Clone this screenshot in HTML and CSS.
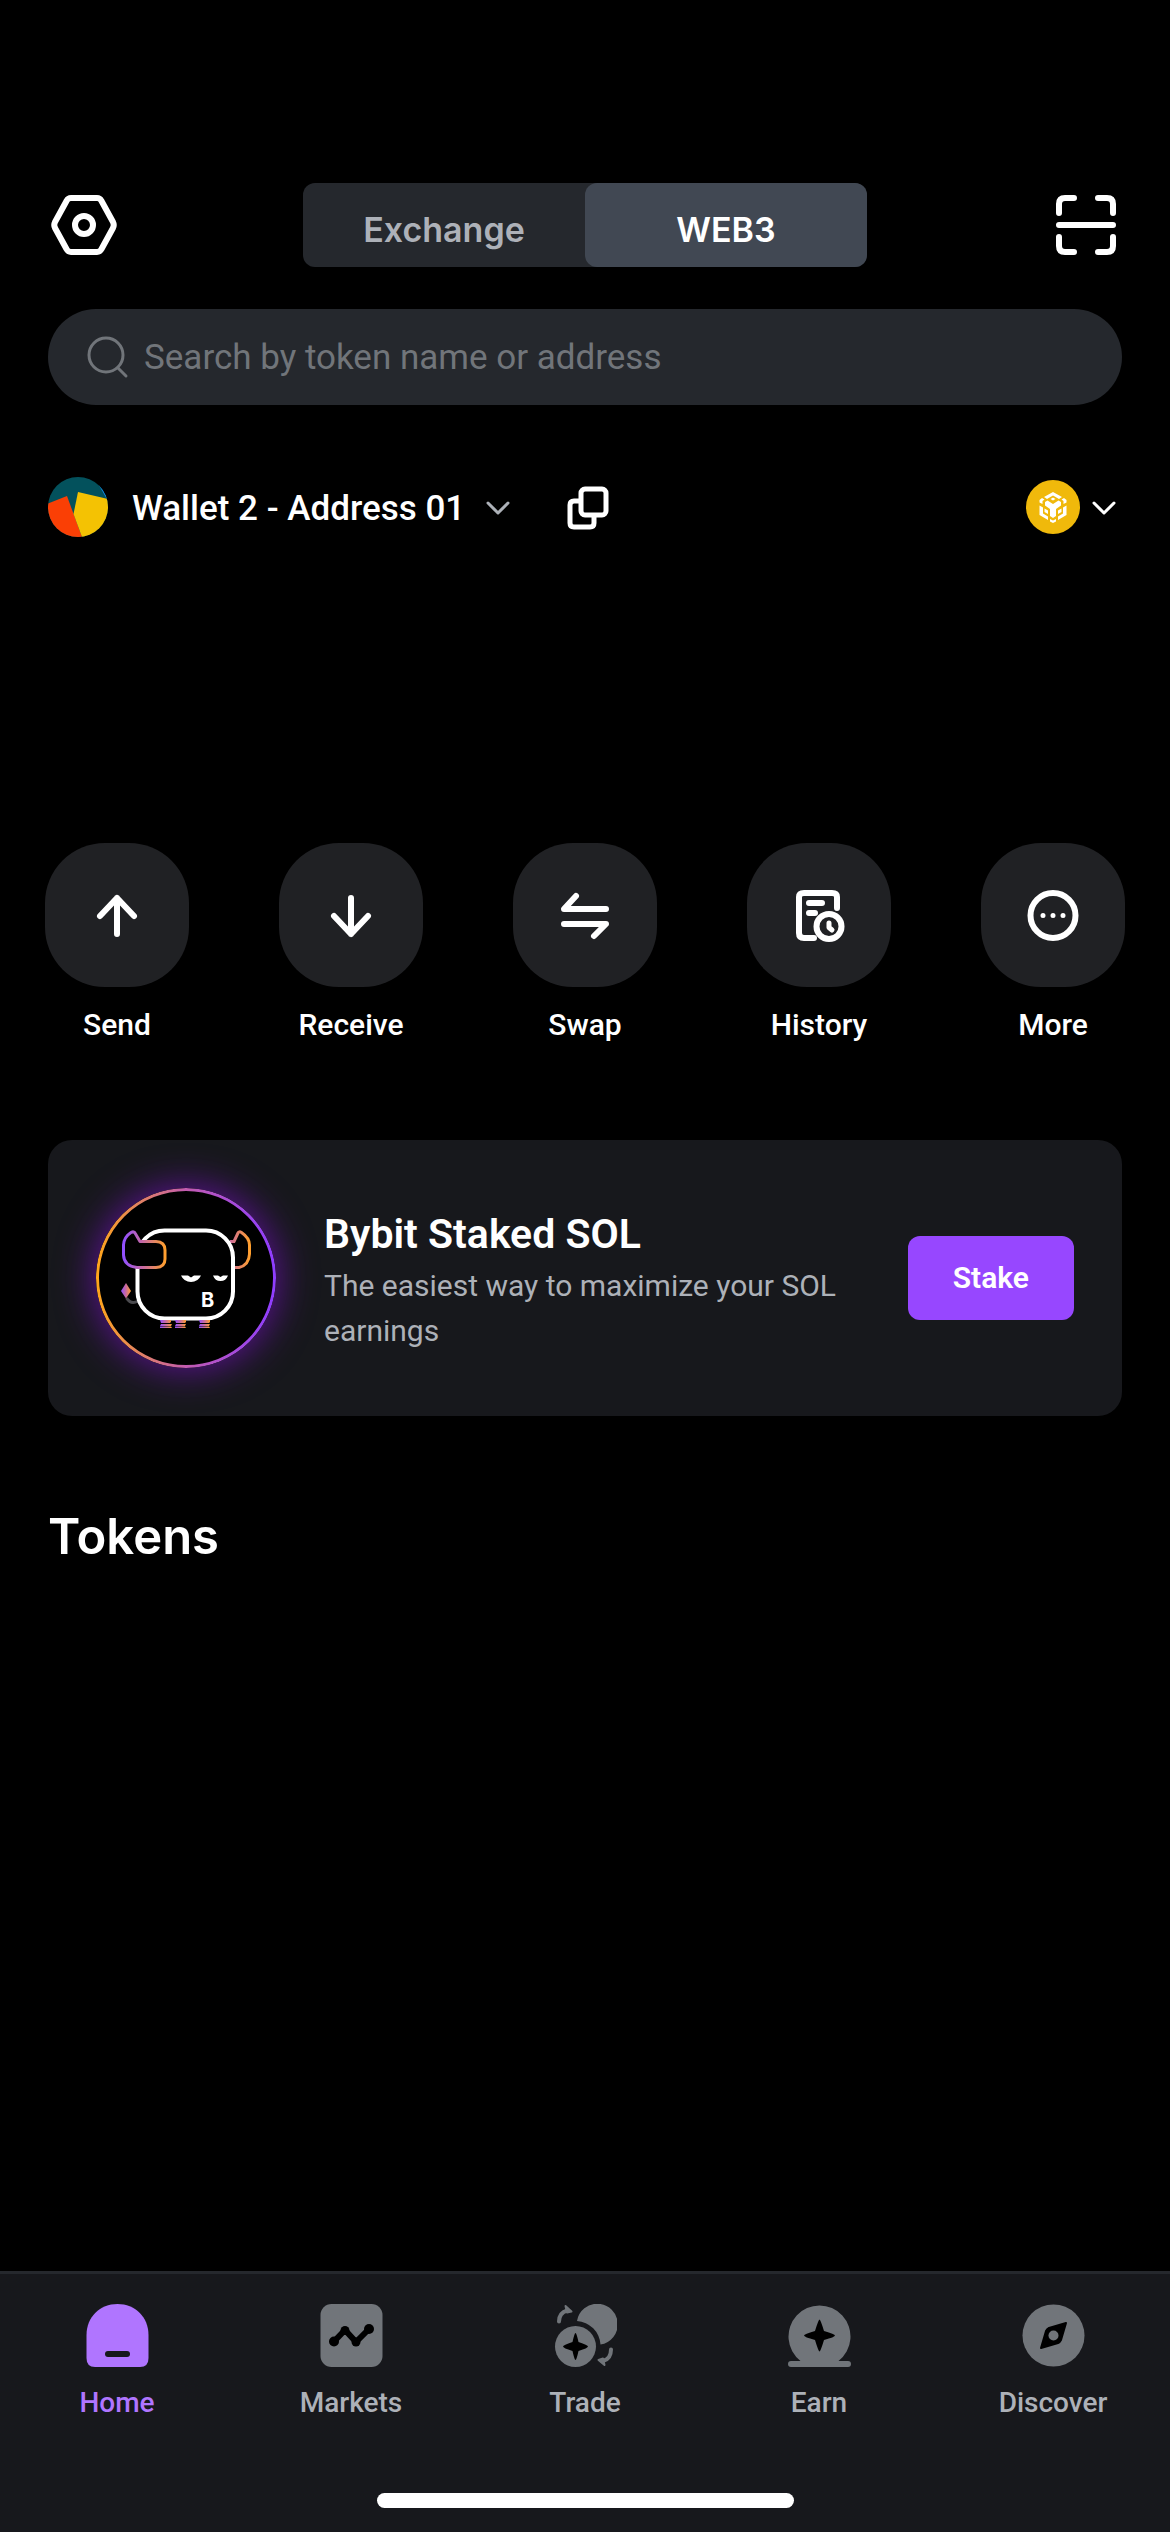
FILE: index.html
```html
<!DOCTYPE html>
<html lang="en">
<head>
<meta charset="utf-8">
<meta name="viewport" content="width=device-width, initial-scale=1">
<title>Wallet</title>
<link rel="stylesheet" href="styles.css">
</head>
<body>
<div class="page">
  <header class="topbar">
    <button class="icon-btn" aria-label="Settings">
      <svg width="72" height="72" viewBox="0 0 72 72" fill="none" stroke="#fff" stroke-width="6" stroke-linejoin="round"><path d="M23 9H49Q52 9 53.500 12L65 33Q66.500 36 65 39L53.500 60Q52 63 49 63H23Q20 63 18.500 60L7 39Q5.500 36 7 33L18.500 12Q20 9 23 9Z"/><circle cx="36" cy="36" r="9"/></svg>
    </button>
    <div class="segment">
      <button class="segment-item">Exchange</button>
      <button class="segment-item is-active">WEB3</button>
    </div>
    <button class="icon-btn" aria-label="Scan">
      <svg width="72" height="72" viewBox="0 0 72 72" fill="none" stroke="#fff" stroke-width="6" stroke-linecap="round"><path d="M9 24V15Q9 9 15 9H24M48 9H57Q63 9 63 15V24M63 48V57Q63 63 57 63H48M24 63H15Q9 63 9 57V48M9 36H63"/></svg>
    </button>
  </header>

  <label class="search">
    <svg width="48" height="48" viewBox="0 0 48 48" fill="none" stroke="#71757a" stroke-width="3" stroke-linecap="round"><circle cx="22" cy="22" r="17"/><path d="M34 35L42 43"/></svg>
    <input class="search-input" type="text" placeholder="Search by token name or address" aria-label="Search by token name or address">
  </label>

  <section class="account">
    <button class="wallet">
      <svg width="60" height="60" viewBox="0 0 60 60"><defs><clipPath id="av"><circle cx="30" cy="30" r="30"/></clipPath></defs><g clip-path="url(#av)"><path fill="#03515c" d="M0 0H60V60H0Z"/><path fill="#1190f5" d="M48 3L60 24V0Z"/><path fill="#fa3f05" d="M0 26.500L19 19L34 60H0Z"/><path fill="#f4c203" d="M30 15L60 22V60H34L25.500 37Z"/></g></svg>
      <span class="wallet-name">Wallet 2 - Address 01</span>
      <svg width="24" height="24" viewBox="0 0 24 24" fill="none" stroke="#adb1b8" stroke-width="3" stroke-linecap="round" stroke-linejoin="round"><path d="M2 8L12 18L22 8"/></svg>
    </button>
    <button class="icon-btn copy" aria-label="Copy address">
      <svg width="48" height="48" viewBox="0 0 48 48" fill="none" stroke="#fff" stroke-width="5" stroke-linejoin="round"><rect x="17" y="6" width="25" height="26" rx="4"/><path d="M17 18H10Q6 18 6 22V40Q6 44 10 44H26Q30 44 30 40V32"/></svg>
    </button>
    <button class="network" aria-label="Select network">
      <svg width="54" height="54" viewBox="0 0 54 54"><circle cx="27" cy="27" r="27" fill="#f0b90b"/><g fill="#fff"><path d="M27 12L36 17L33 19L27 15.500L21 19L18 17Z"/><path d="M27 17.500L29.500 19L27 20.500L24.500 19Z"/><path d="M19 22L21.500 20.500L27 24L32.500 20.500L35 22V25.500L30 29V36L27 38L24 36V29L19 25.500Z"/><path d="M13.500 20L16 18L18.500 19.500L16.500 21V24L13.500 22.500ZM40.500 20L38 18L35.500 19.500L37.500 21V24L40.500 22.500Z"/><path d="M13.500 25.500L17 27.500V33.500L22 36.500V40L13.500 35ZM40.500 25.500L37 27.500V33.500L32 36.500V40L40.500 35Z"/><path d="M18.500 28.500L22 30.500V34L18.500 32ZM35.500 28.500L32 30.500V34L35.500 32Z"/><path d="M24 39L27 40.500L30 39V41.500L27 43L24 41.500Z"/></g></svg>
      <svg width="24" height="24" viewBox="0 0 24 24" fill="none" stroke="#fff" stroke-width="3" stroke-linecap="round" stroke-linejoin="round"><path d="M2 8L12 18L22 8"/></svg>
    </button>
  </section>

  <section class="actions">
    <button class="action">
      <span class="tile"><svg width="72" height="72" viewBox="0 0 72 72"><path d="M36 55V19M19 37L36 19L53 37"/></svg></span>
      <span>Send</span>
    </button>
    <button class="action">
      <span class="tile"><svg width="72" height="72" viewBox="0 0 72 72"><path d="M36 19V55M19 37L36 55L53 37"/></svg></span>
      <span>Receive</span>
    </button>
    <button class="action">
      <span class="tile"><svg width="72" height="72" viewBox="0 0 72 72"><path d="M57 30H15L27 17M15 45H57L45 57"/></svg></span>
      <span>Swap</span>
    </button>
    <button class="action">
      <span class="tile"><svg width="72" height="72" viewBox="0 0 72 72"><path d="M31 59H21Q16 59 16 54V18Q16 14 21 14H49Q54 14 54 18V29M26 24H39M26 34H32"/><circle cx="46" cy="47.500" r="12.500"/><path stroke-width="5" d="M46 44V48.500L49 51"/></svg></span>
      <span>History</span>
    </button>
    <button class="action">
      <span class="tile"><svg width="72" height="72" viewBox="0 0 72 72"><circle cx="36" cy="36.500" r="22.500"/><path stroke-width="5" d="M26 36.500H26.010M36 36.500H36.010M46 36.500H46.010"/></svg></span>
      <span>More</span>
    </button>
  </section>

  <section class="promo">
    <svg class="bull" width="180" height="180" viewBox="0 0 180 180" fill="none">
      <defs>
        <linearGradient id="ring" x1="0" x2="1" y1="0" y2="0"><stop offset="0" stop-color="#ffa51c"/><stop offset=".5" stop-color="#c25bb0"/><stop offset="1" stop-color="#8f3dff"/></linearGradient>
        <linearGradient id="horn" x1="0" x2="1" y1="0" y2="0"><stop offset="0" stop-color="#9150ff"/><stop offset=".45" stop-color="#c568a5"/><stop offset="1" stop-color="#ff9f2e"/></linearGradient>
        <linearGradient id="horn2" x1="0" x2="1" y1="0" y2="0"><stop offset="0" stop-color="#cc6b9c"/><stop offset="1" stop-color="#ff9f2e"/></linearGradient>
      </defs>
      <circle cx="90" cy="90" r="88.500" fill="#000" stroke="url(#ring)" stroke-width="3"/>
      <path stroke="url(#horn2)" stroke-width="3" stroke-linejoin="round" d="M134 53.500H138L142 45Q143 43 145.500 44.500Q153.500 50 153.500 57V66Q153 77 143 79.500H134"/>
      <path stroke="#4b4b4f" stroke-width="3" d="M30.500 110Q35 117 42 113"/>
      <rect x="41.500" y="42.500" width="95.500" height="88" rx="27" fill="#000" stroke="#fff" stroke-width="4"/>
      <path fill="#000" stroke="url(#horn)" stroke-width="3" stroke-linejoin="round" d="M35 44.500Q38 43 39 45L44 53.500H60Q69 54 69 62V71Q69 79 60 79.500H41Q28 78 27.500 67V57Q28 49 35 44.500Z"/>
      <path fill="#fff" d="M85 87.500H92L95 89.500L98 87.500H105Q102 94 95 94Q88 94 85 87.500ZM117 87.500H122L124.500 89L127 87.500H132Q130 93 124.500 93Q119 93 117 87.500Z"/>
      <text class="bull-letter" x="105" y="119">B</text>
      <path fill="url(#horn)" d="M30 95L35 103L30 110.500L25 103Z"/>
      <g fill="url(#horn)"><path d="M64 132H75V134L74 135H65ZM65 136H76L75 138H64ZM64 138.500H75L76 140H64Z"/><path d="M79 132H90V134L89 135H80ZM80 136H90L89 138H79ZM79 138.500H89L90 140H79Z"/><path d="M103 132H114V134L113 135H104ZM104 136H114L113 138H103ZM103 138.500H113L114 140H103Z"/></g>
    </svg>
    <div class="promo-text">
      <h2 class="promo-title">Bybit Staked SOL</h2>
      <p class="promo-desc">The easiest way to maximize your SOL earnings</p>
    </div>
    <button class="stake">Stake</button>
  </section>

  <h1 class="heading">Tokens</h1>

  <footer class="tabbar">
    <nav class="tabs">
      <a class="tab is-current" href="#home">
        <svg width="63" height="63" viewBox="0 0 63 63"><path fill="#b075ff" d="M31.500 0C49 0 62.500 13 62.500 31V54Q62.500 63 54 63H9Q.5 63 .5 54V31C.5 13 14 0 31.500 0Z"/><rect x="19" y="47" width="25" height="6" rx="3" fill="#17181c"/></svg>
        <span>Home</span>
      </a>
      <a class="tab" href="#markets">
        <svg width="63" height="63" viewBox="0 0 63 63"><rect x=".5" width="62" height="63" rx="11" fill="#71757a"/><path fill="none" stroke="#000" stroke-width="6" stroke-linejoin="round" d="M14 37.500L25 26L36 38L49 25"/><circle cx="14" cy="37.500" r="5"/><circle cx="25" cy="26.500" r="4.500"/><circle cx="36" cy="38" r="4.500"/><circle cx="49" cy="25" r="5"/></svg>
        <span>Markets</span>
      </a>
      <a class="tab" href="#trade">
        <svg width="63" height="63" viewBox="0 0 63 63"><path fill="#71757a" d="M23 17A20.500 20.500 0 1 1 46.500 40.500A25 25 0 0 0 23 17Z"/><circle cx="21.500" cy="42.500" r="20.500" fill="#71757a"/><path d="M21.500 29Q22.500 29 24.500 38Q34 41 34 42.500Q34 44 24.500 47Q22.500 56 21.500 56Q20.500 56 18.500 47Q9 44 9 42.500Q9 41 18.500 38Q20.500 29 21.500 29Z"/><path fill="none" stroke="#71757a" stroke-width="4" stroke-linecap="round" d="M5 17.500Q5 9 13 6.500M57 45.500Q57 55 49 57"/><path fill="#71757a" stroke="#71757a" stroke-width="2" stroke-linejoin="round" d="M11.500 2L17.500 7.500L13 8.500ZM50.500 61L44.500 56L49 54.500Z"/></svg>
        <span>Trade</span>
      </a>
      <a class="tab" href="#earn">
        <svg width="63" height="63" viewBox="0 0 63 63"><path fill="#71757a" d="M12.500 57A31 31 0 1 1 50.500 57H60A3 3 0 0 1 60 63H3A3 3 0 0 1 3 57Z"/><path d="M31.500 15.500Q32.500 15.500 36 27Q47 30 47 31.500Q47 33 36 36Q32.500 47.500 31.500 47.500Q30.500 47.500 27 36Q16 33 16 31.500Q16 30 27 27Q30.500 15.500 31.500 15.500Z"/></svg>
        <span>Earn</span>
      </a>
      <a class="tab" href="#discover">
        <svg width="63" height="63" viewBox="0 0 63 63"><circle cx="31.500" cy="31.500" r="31" fill="#71757a"/><path stroke="#000" stroke-width="2" stroke-linejoin="round" d="M44 19L27 24Q25 25 24 27L19 44L36 39Q38 38 39 36Z"/><circle cx="31.500" cy="31.500" r="5" fill="#71757a"/></svg>
        <span>Discover</span>
      </a>
    </nav>
    <div class="home-indicator"></div>
  </footer>
</div>
</body>
</html>
```
FILE: styles.css
```css
* {
  box-sizing: border-box;
}

body {
  margin: 0;
  background: #000;
  color: #fff;
  font-family: "Roboto", sans-serif;
  font-size: 30px;
  line-height: 45px;
}

button {
  padding: 0;
  border: 0;
  background: none;
  color: inherit;
  font: inherit;
}

svg {
  display: block;
  flex: none;
}

h1,
h2,
p {
  margin: 0;
}

.page {
  display: flex;
  flex-direction: column;
  min-height: 100vh;
  padding-top: 183px;
}

.topbar {
  display: flex;
  align-items: center;
  justify-content: space-between;
  padding: 0 48px;
}

.segment {
  display: grid;
  grid-template-columns: 1fr 1fr;
  width: 564px;
  border-radius: 12px;
  background: #25282d;
  font-family: "Inter", sans-serif;
  font-size: 34px;
  font-weight: 600;
  color: #adb1b8;
}

.segment-item {
  padding: 23px 0 13px;
  line-height: 48px;
}

.segment-item.is-active {
  border-radius: 12px;
  background: #414853;
  color: #fff;
}

.search {
  display: flex;
  align-items: center;
  gap: 12px;
  margin: 42px 48px 0;
  padding: 0 36px;
  border-radius: 48px;
  background: #25282d;
}

.search-input {
  flex: 1;
  min-width: 0;
  padding: 25px 0 23px;
  border: 0;
  outline: 0;
  background: none;
  color: #fff;
  font-family: inherit;
  font-size: 35px;
  line-height: 48px;
}

.search-input::placeholder {
  color: #71757a;
  opacity: 1;
}

.account {
  display: flex;
  align-items: center;
  margin: 72px 48px 0;
}

.wallet {
  display: flex;
  align-items: center;
  gap: 18px;
}

.wallet-name {
  padding: 3px 3px 0 6px;
  font-size: 35px;
  font-weight: 500;
}

.copy {
  margin-left: 54px;
}

.network {
  display: flex;
  align-items: center;
  gap: 12px;
  margin-left: auto;
  padding-right: 6px;
}

.actions {
  display: grid;
  grid-template-columns: repeat(5, 1fr);
  margin-top: 306px;
}

.action {
  display: flex;
  flex-direction: column;
  align-items: center;
  gap: 15px;
  font-weight: 500;
}

.tile {
  display: grid;
  place-items: center;
  width: 144px;
  height: 144px;
  border-radius: 60px;
  background: #202124;
}

.tile svg {
  fill: none;
  stroke: #fff;
  stroke-width: 6px;
  stroke-linecap: round;
  stroke-linejoin: round;
}

.promo {
  display: flex;
  align-items: center;
  gap: 48px;
  margin: 93px 48px 0;
  padding: 48px;
  border-radius: 24px;
  background: #17181c;
}

.bull {
  border-radius: 50%;
  box-shadow: 0 0 36px 3px #5a1290;
}

.bull-letter {
  fill: #fff;
  font-family: "Inter", sans-serif;
  font-size: 20px;
  font-weight: 700;
}

.promo-text {
  flex: 1;
  padding-top: 4px;
}

.promo-title {
  margin-bottom: 2px;
  font-size: 41px;
  font-weight: 600;
  line-height: 54px;
}

.promo-desc {
  color: #adb1b8;
}

.stake {
  padding: 18px 45px;
  border-radius: 12px;
  background: #9747ff;
  font-weight: 600;
  line-height: 48px;
}

.heading {
  margin: 91px 48px 48px;
  font-family: "Inter", sans-serif;
  font-size: 49px;
  font-weight: 600;
  line-height: 60px;
}

.tabbar {
  margin-top: auto;
  padding: 30px 0 24px;
  border-top: 3px solid #25282d;
  background: #17181c;
}

.tabs {
  display: grid;
  grid-template-columns: repeat(5, 1fr);
}

.tab {
  display: flex;
  flex-direction: column;
  align-items: center;
  gap: 18px;
  color: #adb1b8;
  font-size: 28px;
  font-weight: 500;
  line-height: 36px;
  text-decoration: none;
}

.tab.is-current {
  color: #b075ff;
}

.home-indicator {
  width: 417px;
  max-width: 60%;
  height: 15px;
  margin: 72px auto 0;
  border-radius: 8px;
  background: #fff;
}
```
